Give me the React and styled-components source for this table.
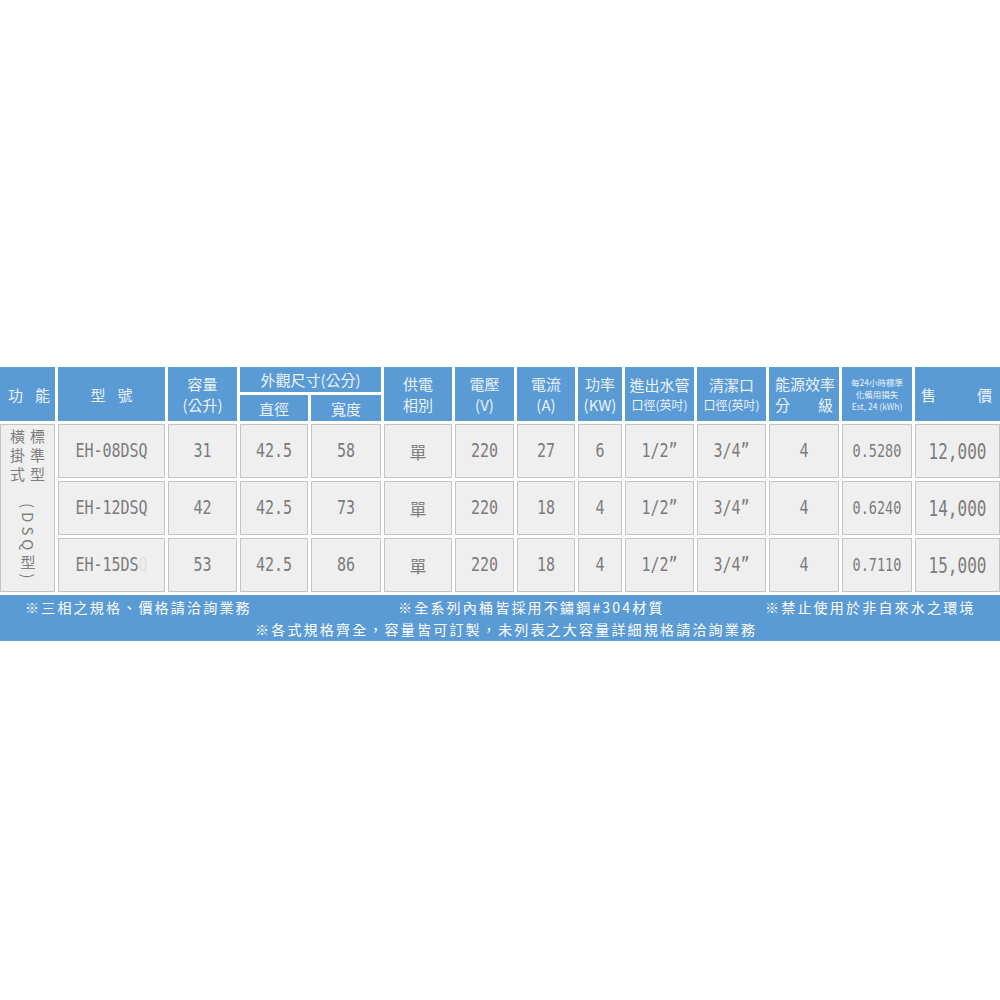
import React from "react";
import styled, { createGlobalStyle } from "styled-components";

const GlobalStyle = createGlobalStyle`
  html, body {
    margin: 0;
    padding: 0;
    background: #fff;
  }
  body {
    font-family: "Noto Sans CJK TC", "Noto Sans", sans-serif;
  }
`;

const cjk = `"Noto Sans CJK TC", "Noto Sans", sans-serif`;
const mono = `"DejaVu Sans Mono", "Liberation Mono", monospace`;
const blue = "#5b9bd5";

const Page = styled.div`
  width: 1000px;
  height: 1000px;
  padding-top: 367px;
  box-sizing: border-box;
  background: #fff;
`;

const Table = styled.div`
  display: grid;
  grid-template-columns: 55px 107px 69px 68px 70px 68px 59px 58px 44px 69px 69px 70px 70px 85px;
  grid-template-rows: 25px 26px 54px 54px 54px 46px;
  gap: 3px;
`;

const Head = styled.div`
  grid-row: span ${(p) => p.$rows || 1};
  grid-column: span ${(p) => p.$cols || 1};
  background: ${blue};
  color: #eaf2fb;
  font-family: ${cjk};
  font-size: 15px;
  line-height: 21px;
  display: flex;
  flex-direction: column;
  align-items: ${(p) => (p.$stretch ? "stretch" : "center")};
  justify-content: center;
  padding-left: ${(p) => p.$padL || 0}px;
  padding-right: ${(p) => (p.$padR != null ? p.$padR : p.$padL || 0)}px;
  box-sizing: border-box;
  white-space: nowrap;
`;

const Spread = styled.div`
  display: flex;
  justify-content: ${(p) => (p.$gap ? "center" : "space-between")};
  gap: ${(p) => p.$gap || 0}px;
`;

const Small = styled.span`
  font-size: 12px;
  line-height: 20px;
`;

const Tiny = styled.span`
  font-size: 8.5px;
  line-height: 12px;
  text-align: center;
`;

const Cell = styled.div`
  background: #efefef;
  border: 1px solid #c4c4c4;
  display: flex;
  align-items: center;
  justify-content: center;
  color: #7c7c7c;
  font-family: ${mono};
  font-size: ${(p) => p.$size || 15}px;
  white-space: pre;
`;

const Value = styled.span`
  display: inline-block;
  transform: scaleY(1.28);
`;

const Ghost = styled.span`
  color: #e2e2e2;
`;

const Han = styled.span`
  font-family: ${cjk};
  font-size: 17px;
  color: #808080;
`;

const Kind = styled(Cell)`
  grid-row: span 3;
  flex-direction: column;
  justify-content: flex-start;
  padding-top: 1px;
  font-family: ${cjk};
  font-size: 15px;
  color: #7e7e7e;
`;

const KindGrid = styled.div`
  display: grid;
  grid-template-columns: auto auto;
  column-gap: 5px;
  line-height: 19px;
`;

const Vertical = styled.span`
  writing-mode: vertical-rl;
  margin-top: 20px;
  letter-spacing: 4px;
  line-height: 16px;
`;

const Footer = styled.div`
  grid-column: 1 / -1;
  background: ${blue};
  color: #fff;
  font-family: ${cjk};
  font-size: 14px;
  letter-spacing: 2.2px;
  line-height: 22px;
  display: flex;
  flex-direction: column;
  justify-content: center;
  white-space: nowrap;
`;

const NoteLine = styled.div`
  display: grid;
  grid-template-columns: 373px 367px auto;
  padding-left: 25px;
`;

const NoteIndent = styled.div`
  padding-left: 255px;
`;

const rows = [
  { model: "EH-08DSQ", cap: "31", dia: "42.5", w: "58", v: "220", a: "27", kw: "6", loss: "0.5280", price: "12,000" },
  { model: "EH-12DSQ", cap: "42", dia: "42.5", w: "73", v: "220", a: "18", kw: "4", loss: "0.6240", price: "14,000" },
  { model: "EH-15DS", ghost: "Q", cap: "53", dia: "42.5", w: "86", v: "220", a: "18", kw: "4", loss: "0.7110", price: "15,000" },
];

export default function App() {
  return (
    <Page>
      <GlobalStyle />
      <Table>
        <Head $rows={2} $stretch $padL={8} $padR={5}>
          <Spread>
            <span>功</span>
            <span>能</span>
          </Spread>
        </Head>
        <Head $rows={2}>
          <Spread $gap={12}>
            <span>型</span>
            <span>號</span>
          </Spread>
        </Head>
        <Head $rows={2}>
          <span>容量</span>
          <span>(公升)</span>
        </Head>
        <Head $cols={2}>外觀尺寸(公分)</Head>
        <Head $rows={2}>
          <span>供電</span>
          <span>相別</span>
        </Head>
        <Head $rows={2}>
          <span>電壓</span>
          <span>(V)</span>
        </Head>
        <Head $rows={2}>
          <span>電流</span>
          <span>(A)</span>
        </Head>
        <Head $rows={2}>
          <span>功率</span>
          <span>(KW)</span>
        </Head>
        <Head $rows={2}>
          <span>進出水管</span>
          <Small>口徑(英吋)</Small>
        </Head>
        <Head $rows={2}>
          <span>清潔口</span>
          <Small>口徑(英吋)</Small>
        </Head>
        <Head $rows={2} $stretch $padL={6}>
          <span>能源效率</span>
          <Spread>
            <span>分</span>
            <span>級</span>
          </Spread>
        </Head>
        <Head $rows={2}>
          <Tiny>每24小時標準</Tiny>
          <Tiny>化備用損失</Tiny>
          <Tiny>Est, 24 (kWh)</Tiny>
        </Head>
        <Head $rows={2} $stretch $padL={6} $padR={8}>
          <Spread>
            <span>售</span>
            <span>價</span>
          </Spread>
        </Head>
        <Head>直徑</Head>
        <Head>寬度</Head>

        <Kind>
          <KindGrid>
            <span>橫</span>
            <span>標</span>
            <span>掛</span>
            <span>準</span>
            <span>式</span>
            <span>型</span>
          </KindGrid>
          <Vertical>(DSQ型)</Vertical>
        </Kind>

        {rows.map((r) => (
          <React.Fragment key={r.model}>
            <Cell>
              <Value>
                {r.model}
                {r.ghost && <Ghost>{r.ghost}</Ghost>}
              </Value>
            </Cell>
            <Cell><Value>{r.cap}</Value></Cell>
            <Cell><Value>{r.dia}</Value></Cell>
            <Cell><Value>{r.w}</Value></Cell>
            <Cell><Han>單</Han></Cell>
            <Cell><Value>{r.v}</Value></Cell>
            <Cell><Value>{r.a}</Value></Cell>
            <Cell><Value>{r.kw}</Value></Cell>
            <Cell><Value>1/2”</Value></Cell>
            <Cell><Value>3/4”</Value></Cell>
            <Cell><Value>4</Value></Cell>
            <Cell $size={13.5}><Value>{r.loss}</Value></Cell>
            <Cell $size={16}><Value>{r.price}</Value></Cell>
          </React.Fragment>
        ))}

        <Footer>
          <NoteLine>
            <span>※三相之規格、價格請洽詢業務</span>
            <span>※全系列內桶皆採用不鏽鋼#304材質</span>
            <span>※禁止使用於非自來水之環境</span>
          </NoteLine>
          <NoteIndent>※各式規格齊全，容量皆可訂製，未列表之大容量詳細規格請洽詢業務</NoteIndent>
        </Footer>
      </Table>
    </Page>
  );
}
